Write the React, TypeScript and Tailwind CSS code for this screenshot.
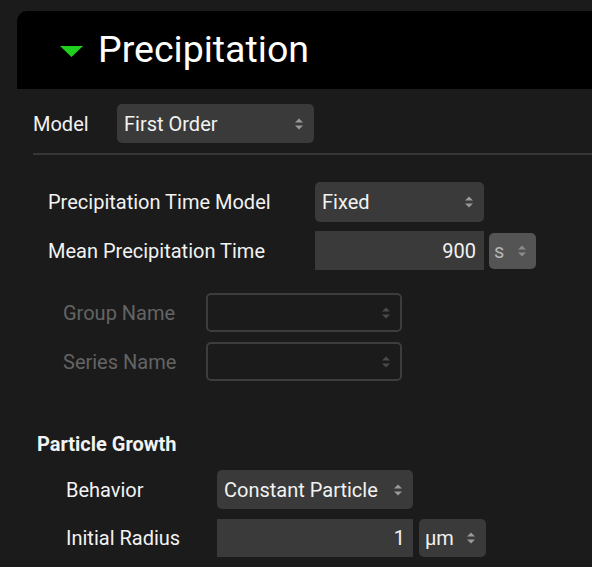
import React from "react";

function Arrows({ color = "#9a9a9a" }: { color?: string }) {
  return (
    <svg width="10" height="14" viewBox="0 0 10 14" className="shrink-0">
      <path d="M1 5.5 L5 1.5 L9 5.5 Z" fill={color} />
      <path d="M1 8.5 L5 12.5 L9 8.5 Z" fill={color} />
    </svg>
  );
}

function Select({ value, className = "" }: { value: string; className?: string }) {
  return (
    <div className={`flex items-center justify-between rounded-[5px] bg-[#3a3a3a] pl-[7px] pr-[10px] text-[20px] text-[#f2f2f2] ${className}`}>
      <span>{value}</span>
      <Arrows />
    </div>
  );
}

function EmptySelect() {
  return (
    <div className="flex h-[39px] w-[196px] items-center justify-end rounded-[5px] border-2 border-[#3d3d3d] pr-[9px]">
      <Arrows color="#4a4a4a" />
    </div>
  );
}

function NumberInput({ value, className = "" }: { value: string; className?: string }) {
  return (
    <div className={`flex items-center justify-end bg-[#3a3a3a] pr-[8px] text-[20px] text-[#f2f2f2] ${className}`}>
      {value}
    </div>
  );
}

export default function App() {
  return (
    <div className="flex h-[567px] w-[592px] flex-col overflow-hidden bg-[#1b1b1b] font-['Roboto',sans-serif]">
      {/* section header */}
      <div className="ml-[17px] mt-[11px] flex h-[78px] items-center gap-[15px] rounded-tl-[10px] bg-black pl-[43px]">
        <svg width="23" height="11" viewBox="0 0 23 11" className="mt-[2px]">
          <path d="M0 0 L23 0 L11.5 11 Z" fill="#1fd01f" />
        </svg>
        <span className="text-[37.5px] leading-none text-white">Precipitation</span>
      </div>

      <div className="ml-[33px] mt-[15px] flex items-center">
        <span className="w-[84px] text-[20px] text-[#f2f2f2]">Model</span>
        <Select value="First Order" className="h-[39px] w-[197px]" />
      </div>

      <div className="ml-[33px] mt-[10px] h-[2px] bg-[#363636]" />

      <div className="ml-[48px] mt-[27px] flex flex-col gap-[9px]">
        <div className="flex items-center">
          <span className="w-[267px] text-[20px] text-[#f2f2f2]">Precipitation Time Model</span>
          <Select value="Fixed" className="h-[40px] w-[169px]" />
        </div>
        <div className="flex items-center">
          <span className="w-[267px] text-[20px] text-[#f2f2f2]">Mean Precipitation Time</span>
          <NumberInput value="900" className="h-[39px] w-[169px]" />
          <div className="ml-[5px] flex h-[36px] w-[47px] items-center justify-between rounded-[5px] bg-[#545454] pl-[5px] pr-[9px] text-[20px] text-[#b5b5b5]">
            <span>s</span>
            <Arrows color="#8a8a8a" />
          </div>
        </div>
      </div>

      <div className="ml-[63px] mt-[23px] flex flex-col gap-[10px]">
        <div className="flex items-center">
          <span className="w-[143px] text-[20px] text-[#646464]">Group Name</span>
          <EmptySelect />
        </div>
        <div className="flex items-center">
          <span className="w-[143px] text-[20px] text-[#646464]">Series Name</span>
          <EmptySelect />
        </div>
      </div>

      <div className="ml-[37px] mt-[51px] text-[20px] font-bold leading-[24px] text-[#f2f2f2]">Particle Growth</div>

      <div className="ml-[66px] mt-[14px] flex flex-col gap-[10px]">
        <div className="flex items-center">
          <span className="w-[151px] text-[20px] text-[#f2f2f2]">Behavior</span>
          <Select value="Constant Particle" className="h-[39px] w-[196px]" />
        </div>
        <div className="flex items-center">
          <span className="w-[151px] text-[20px] text-[#f2f2f2]">Initial Radius</span>
          <NumberInput value="1" className="h-[38px] w-[196px]" />
          <div className="ml-[6px] flex h-[38px] w-[67px] items-center justify-between rounded-[5px] bg-[#3a3a3a] pl-[6px] pr-[10px] text-[20px] text-[#f2f2f2]">
            <span>μm</span>
            <Arrows />
          </div>
        </div>
      </div>
    </div>
  );
}
